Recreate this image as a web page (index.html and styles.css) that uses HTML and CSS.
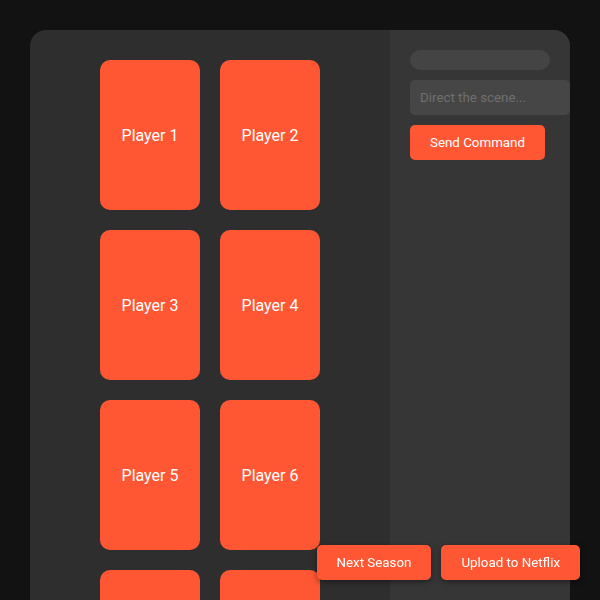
FILE: index.html
```html
<!DOCTYPE html>
<html>
<head>
  <meta charset="UTF-8" />
  <title>Reality Director</title>
  <link rel="stylesheet" href="styles.css">
</head>
<body>

  <div class="studio">
    <!-- Cast grid -->
    <div class="stage">
      <div class="cast">
        <div class="player">Player 1</div>
        <div class="player">Player 2</div>
        <div class="player">Player 3</div>
        <div class="player">Player 4</div>
        <div class="player">Player 5</div>
        <div class="player">Player 6</div>
        <div class="player">Player 7</div>
        <div class="player">Player 8</div>
      </div>
    </div>

    <!-- Director panel -->
    <div class="panel">
      <div class="status-pill"></div>
      <input type="text" class="command-input" placeholder="Direct the scene..." />
      <button class="btn">Send Command</button>
    </div>
  </div>

  <div class="controls">
    <button class="btn btn-float">Next Season</button>
    <button class="btn btn-float">Upload to Netflix</button>
  </div>

</body>
</html>
```

FILE: styles.css
```css
body {
  font-family: Roboto, 'Liberation Sans', sans-serif;
  background: #121212;
  color: #f0f0f0;
  margin: 0;
  padding: 30px;
}

.studio {
  display: grid;
  grid-template-columns: 1fr 180px;
  background: #2e2e2e;
  border-radius: 16px;
  overflow: hidden;
  min-height: 600px;
}

.stage {
  display: flex;
  justify-content: center;
  padding: 30px 0;
}

.cast {
  display: grid;
  grid-template-columns: 100px 100px;
  grid-auto-rows: 150px;
  gap: 20px;
}

.player {
  background: #ff5733;
  border-radius: 10px;
  display: flex;
  align-items: center;
  justify-content: center;
  font-size: 16px;
  color: #fff;
}

.panel {
  background: #363636;
  padding: 20px;
  display: flex;
  flex-direction: column;
  align-items: flex-start;
  gap: 10px;
}

.status-pill {
  width: 140px;
  height: 20px;
  border-radius: 10px;
  background: #444;
}

.command-input {
  width: 140px;
  height: 15px;
  padding: 10px;
  border: none;
  border-radius: 5px;
  background: #464646;
  color: #eee;
  font-family: inherit;
  font-size: 13.33px;
  outline: none;
}

.command-input::placeholder {
  color: #707070;
}

.btn {
  background: #ff5733;
  color: #fff;
  border: none;
  height: 35px;
  padding: 0 20px;
  font-family: inherit;
  font-size: 13.33px;
  border-radius: 5px;
  cursor: pointer;
}

.controls {
  position: fixed;
  right: 20px;
  bottom: 20px;
  display: flex;
  gap: 10px;
}

.btn-float {
  box-shadow: 0 2px 6px rgba(0, 0, 0, 0.4);
}
```
